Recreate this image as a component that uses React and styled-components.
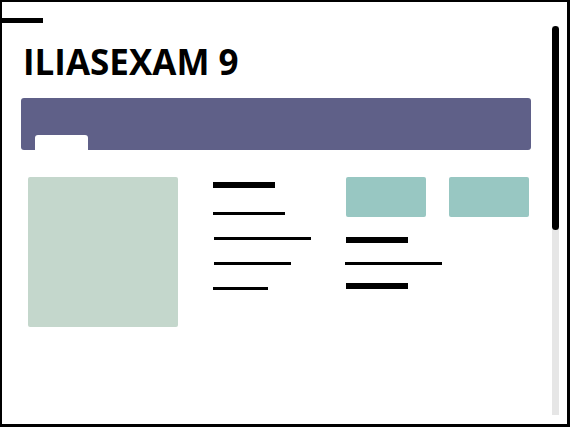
import React from "react"
import styled, { createGlobalStyle } from "styled-components"

const GlobalStyle = createGlobalStyle`
  html, body {
    margin: 0;
    padding: 0;
    background: #fff;
  }
  * {
    box-sizing: border-box;
  }
`

// placeholder text lines: width, thickness, x nudge, gap above
const left = [
  { w: 62, h: 6, x: 0, t: 5 },
  { w: 72, h: 3, x: 0, t: 24 },
  { w: 97, h: 3, x: 1, t: 22 },
  { w: 77, h: 3, x: 1, t: 22 },
  { w: 55, h: 3, x: 0, t: 22 },
]

const right = [
  { w: 62, h: 6, x: 0, t: 20 },
  { w: 97, h: 3, x: -1, t: 19 },
  { w: 62, h: 6, x: 0, t: 18 },
]

export default function App() {
  return (
    <>
      <GlobalStyle />
      <Frame>
        <Main>
          <Dash />
          <Content>
            <Title>ILIASEXAM 9</Title>
            <Banner>
              <Tab />
            </Banner>
            <Body>
              <Thumb />
              <Column>
                {left.map((l, i) => (
                  <Line key={i} $w={l.w} $h={l.h} $x={l.x} $t={l.t} />
                ))}
              </Column>
              <Column>
                <Buttons>
                  <Tile />
                  <Tile />
                </Buttons>
                {right.map((l, i) => (
                  <Line key={i} $w={l.w} $h={l.h} $x={l.x} $t={l.t} />
                ))}
              </Column>
            </Body>
          </Content>
        </Main>
        <Track>
          <Handle />
        </Track>
      </Frame>
    </>
  )
}

const Frame = styled.div`
  width: 570px;
  height: 427px;
  border-style: solid;
  border-color: #000;
  border-width: 2px 3px 3px 2px;
  display: flex;
  background: #fff;
`

const Main = styled.div`
  width: 529px;
  display: flex;
  flex-direction: column;
`

const Dash = styled.div`
  margin-top: 16px;
  width: 41px;
  height: 5px;
  background: #000;
`

const Content = styled.div`
  padding-left: 19px;
`

const Title = styled.h1`
  margin: 18px 0 0 2px;
  font-family: "Open Sans", "Liberation Sans", sans-serif;
  font-weight: 700;
  font-size: 35px;
  line-height: 42px;
  color: #000;
`

const Banner = styled.div`
  margin-top: 15px;
  width: 510px;
  height: 52px;
  background: #5f6088;
  border-radius: 3px;
  display: flex;
  align-items: flex-end;
  padding-left: 14px;
`

const Tab = styled.div`
  width: 53px;
  height: 15px;
  background: #fff;
  border-radius: 3px 3px 0 0;
`

const Body = styled.div`
  margin-top: 27px;
  padding-left: 7px;
  display: grid;
  grid-template-columns: 150px 98px 183px;
  column-gap: 35px;
  align-items: start;
`

const Thumb = styled.div`
  width: 150px;
  height: 150px;
  background: #c4d7cc;
  border-radius: 2px;
`

const Column = styled.div`
  display: flex;
  flex-direction: column;
  align-items: flex-start;
`

const Line = styled.div`
  width: ${p => p.$w}px;
  height: ${p => p.$h}px;
  margin-top: ${p => p.$t}px;
  margin-left: ${p => p.$x}px;
  background: #000;
`

const Buttons = styled.div`
  display: flex;
  gap: 23px;
`

const Tile = styled.div`
  width: 80px;
  height: 40px;
  background: #98c7c2;
  border-radius: 2px;
`

const Track = styled.div`
  margin: 24px 0 0 21px;
  width: 7px;
  height: 389px;
  background: #e6e6e6;
`

const Handle = styled.div`
  width: 7px;
  height: 204px;
  background: #000;
  border-radius: 4px;
`
